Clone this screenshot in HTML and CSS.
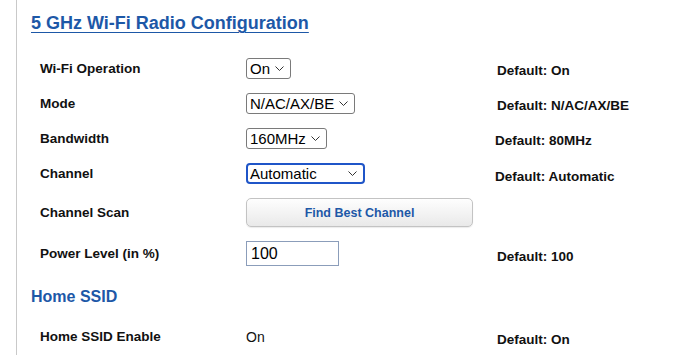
FILE: index.html
```html
<!DOCTYPE html>
<html lang="en">
<head>
  <meta charset="UTF-8">
  <meta name="viewport" content="width=device-width, initial-scale=1.0">
  <title>5 GHz Wi-Fi Radio Configuration</title>
  <link rel="stylesheet" href="styles.css">
</head>
<body>
  <div class="page">
    <h1 class="section-title">5 GHz Wi-Fi Radio Configuration</h1>

    <div class="settings">
      <div class="row">
        <div class="row-label">Wi-Fi Operation</div>
        <div class="row-control">
          <div class="select">
            <span>On</span>
            <svg class="chevron" viewBox="0 0 9 5"><path d="M0.5 0.5 L4.5 4.5 L8.5 0.5"/></svg>
          </div>
        </div>
        <div class="row-default">Default: On</div>
      </div>

      <div class="row">
        <div class="row-label">Mode</div>
        <div class="row-control">
          <div class="select">
            <span>N/AC/AX/BE</span>
            <svg class="chevron" viewBox="0 0 9 5"><path d="M0.5 0.5 L4.5 4.5 L8.5 0.5"/></svg>
          </div>
        </div>
        <div class="row-default">Default: N/AC/AX/BE</div>
      </div>

      <div class="row">
        <div class="row-label">Bandwidth</div>
        <div class="row-control">
          <div class="select">
            <span>160MHz</span>
            <svg class="chevron" viewBox="0 0 9 5"><path d="M0.5 0.5 L4.5 4.5 L8.5 0.5"/></svg>
          </div>
        </div>
        <div class="row-default shift-left">Default: 80MHz</div>
      </div>

      <div class="row">
        <div class="row-label">Channel</div>
        <div class="row-control">
          <div class="select select-focus">
            <span>Automatic</span>
            <svg class="chevron" viewBox="0 0 9 5"><path d="M0.5 0.5 L4.5 4.5 L8.5 0.5"/></svg>
          </div>
        </div>
        <div class="row-default shift-left low">Default: Automatic</div>
      </div>

      <div class="row row-scan">
        <div class="row-label">Channel Scan</div>
        <div class="row-control">
          <button class="scan-button" type="button">Find Best Channel</button>
        </div>
        <div class="row-default"></div>
      </div>

      <div class="row row-power">
        <div class="row-label">Power Level (in %)</div>
        <div class="row-control">
          <input class="text-input" type="text" value="100">
        </div>
        <div class="row-default low">Default: 100</div>
      </div>
    </div>

    <h2 class="sub-title">Home SSID</h2>

    <div class="settings">
      <div class="row row-ssid">
        <div class="row-label">Home SSID Enable</div>
        <div class="row-control plain">On</div>
        <div class="row-default low">Default: On</div>
      </div>
    </div>
  </div>
</body>
</html>
```

FILE: styles.css
```css
* {
  box-sizing: border-box;
  margin: 0;
  padding: 0;
}

body {
  font-family: 'Liberation Sans', Arial, sans-serif;
  background-color: #ffffff;
  color: #111111;
  margin: 0;
}

.page {
  margin-left: 16px;
  border-left: 1px solid #c9c9c9;
  padding-left: 14px;
  min-height: 100vh;
}

.section-title {
  font-size: 18px;
  font-weight: bold;
  color: #1d58a7;
  text-decoration: underline;
  text-underline-offset: 3px;
  text-decoration-thickness: 1px;
  padding-top: 13px;
  line-height: 21px;
}

.settings {
  display: flex;
  flex-direction: column;
}

.settings:first-of-type {
  margin-top: 17px;
}

.row {
  display: grid;
  grid-template-columns: 206px 251px 1fr;
  align-items: center;
  height: 35px;
  padding-left: 9px;
}

.row-scan {
  height: 43px;
}

.row-power {
  height: 39px;
}

.row-ssid {
  height: 33px;
}

.row-label {
  font-size: 13.5px;
  font-weight: bold;
}

.row-default {
  font-size: 13.5px;
  font-weight: bold;
  padding-top: 3px;
}

.row-default.low {
  padding-top: 6px;
}

.row-default.shift-left {
  margin-left: -2px;
}

.row-control.plain {
  font-size: 14px;
}

.select {
  display: inline-flex;
  align-items: center;
  height: 21px;
  border: 1px solid #7a7a7a;
  border-radius: 3px;
  padding: 0 6px 0 3px;
  font-size: 15px;
  gap: 5px;
  color: #000000;
  background-color: #ffffff;
}

.select-focus {
  width: 119px;
  border: 2px solid #1f55c8;
  border-radius: 4px;
  padding: 0 6px 0 2px;
  justify-content: space-between;
}

.chevron {
  width: 9px;
  height: 5px;
  fill: none;
  stroke: #333333;
  stroke-width: 1;
}

.scan-button {
  width: 227px;
  height: 29px;
  border: 1px solid #c3c3c3;
  border-radius: 5px;
  background: linear-gradient(#fefefe, #e9e9e9);
  box-shadow: 0 1px 1px rgba(0, 0, 0, 0.08);
  font-family: 'Liberation Sans', Arial, sans-serif;
  font-size: 12.5px;
  font-weight: bold;
  color: #1d58a7;
  cursor: pointer;
}

.text-input {
  width: 93px;
  height: 25px;
  border: 1px solid #8b9dba;
  padding: 0 4px;
  font-family: 'Liberation Sans', Arial, sans-serif;
  font-size: 16px;
  color: #000000;
  outline: none;
}

.sub-title {
  font-size: 16px;
  font-weight: bold;
  color: #1d58a7;
  line-height: 19px;
  padding: 14px 0 14px;
}
```
